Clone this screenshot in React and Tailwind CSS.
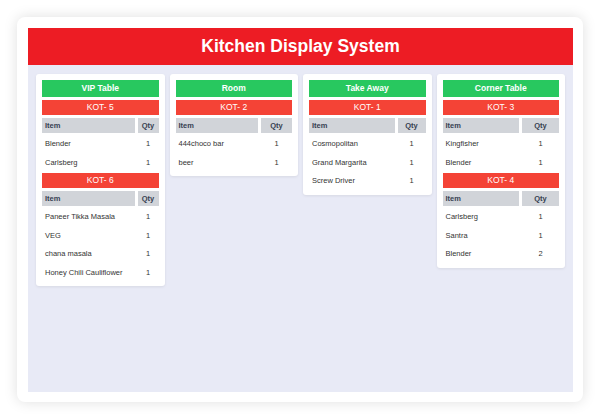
const tables = [
  {
    name: "VIP Table",
    cols: "grid-cols-[1fr_21px]",
    kots: [
      { no: 5, items: [["Blender", 1], ["Carlsberg", 1]] },
      {
        no: 6,
        items: [
          ["Paneer Tikka Masala", 1],
          ["VEG", 1],
          ["chana masala", 1],
          ["Honey Chili Cauliflower", 1],
        ],
      },
    ],
  },
  {
    name: "Room",
    cols: "grid-cols-[1fr_31px]",
    kots: [{ no: 2, items: [["444choco bar", 1], ["beer", 1]] }],
  },
  {
    name: "Take Away",
    cols: "grid-cols-[1fr_28px]",
    kots: [
      {
        no: 1,
        items: [["Cosmopolitan", 1], ["Grand Margarita", 1], ["Screw Driver", 1]],
      },
    ],
  },
  {
    name: "Corner Table",
    cols: "grid-cols-[1fr_37px]",
    kots: [
      { no: 3, items: [["Kingfisher", 1], ["Blender", 1]] },
      { no: 4, items: [["Carlsberg", 1], ["Santra", 1], ["Blender", 2]] },
    ],
  },
];

function Kot({ kot, cols }) {
  return (
    <>
      <div className="h-[15px] flex items-center justify-center bg-[#f44336] text-white text-[8.5px]">
        KOT- {kot.no}
      </div>
      <div className={`grid ${cols} gap-x-[3px] gap-y-[3px]`}>
        <div className="h-[15px] flex items-center pl-[3px] bg-[#d1d4d9] text-[7.5px] font-bold text-[#374151]">
          Item
        </div>
        <div className="h-[15px] flex items-center justify-center bg-[#d1d4d9] text-[7.5px] font-bold text-[#374151]">
          Qty
        </div>
        {kot.items.map(([item, qty], i) => (
          <div key={i} className="contents">
            <div className="h-[15.5px] flex items-center pl-[3px] text-[7.5px] text-[#333]">
              {item}
            </div>
            <div className="h-[15.5px] flex items-center justify-center text-[7.5px] text-[#333]">
              {qty}
            </div>
          </div>
        ))}
      </div>
    </>
  );
}

export default function App() {
  return (
    <div
      className="w-[600px] h-[418px] bg-white pt-[17px] pl-[17px]"
      style={{ fontFamily: '"Liberation Sans", Arial, sans-serif' }}
    >
      <div className="w-[566px] h-[385px] bg-white rounded-lg shadow-[0_0_14px_rgba(0,0,0,0.13)] pt-[11px] pl-[11px] pr-[10px] pb-[10px] flex flex-col">
        {/* ── Header ── */}
        <div className="h-[37px] flex items-center justify-center bg-[#ed1c24]">
          <h1 className="text-white text-[17.5px] font-bold">Kitchen Display System</h1>
        </div>

        {/* ── Board ── */}
        <div className="flex-1 bg-[#e8eaf6] pt-[9px] px-[8px] grid grid-cols-4 gap-[5px] items-start">
          {tables.map((t) => (
            <div
              key={t.name}
              className="bg-white rounded-[3px] shadow-[0_1px_3px_rgba(0,0,0,0.08)] p-[6px] flex flex-col gap-[3px]"
            >
              <div className="h-[17px] flex items-center justify-center bg-[#28c85f] text-white text-[8.5px] font-bold">
                {t.name}
              </div>
              {t.kots.map((k) => (
                <Kot key={k.no} kot={k} cols={t.cols} />
              ))}
            </div>
          ))}
        </div>
      </div>
    </div>
  );
}
